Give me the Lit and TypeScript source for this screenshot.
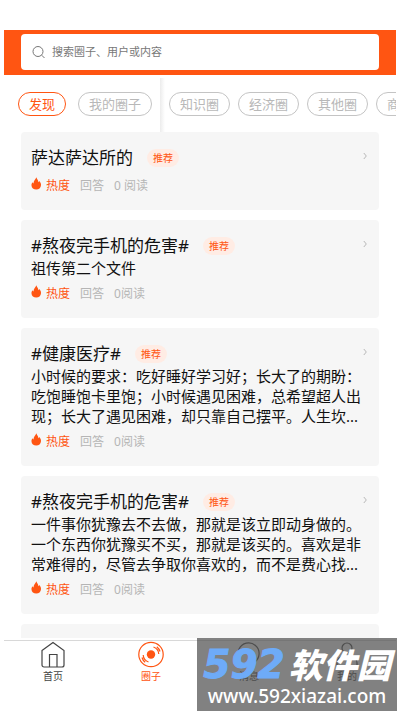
import { LitElement, html, css, svg, nothing } from "lit";
import { customElement, property } from "lit/decorators.js";
import { classMap } from "lit/directives/class-map.js";

interface Post {
  title: string;
  body: string[];
  reads: string;
}

const posts: Post[] = [
  { title: "萨达萨达所的", body: [], reads: "0 阅读" },
  { title: "#熬夜完手机的危害#", body: ["祖传第二个文件"], reads: "0阅读" },
  {
    title: "#健康医疗#",
    body: [
      "小时候的要求：吃好睡好学习好；长大了的期盼：",
      "吃饱睡饱卡里饱；小时候遇见困难，总希望超人出",
      "现；长大了遇见困难，却只靠自己摆平。人生坎...",
    ],
    reads: "0阅读",
  },
  {
    title: "#熬夜完手机的危害#",
    body: [
      "一件事你犹豫去不去做，那就是该立即动身做的。",
      "一个东西你犹豫买不买，那就是该买的。喜欢是非",
      "常难得的，尽管去争取你喜欢的，而不是费心找...",
    ],
    reads: "0阅读",
  },
];

const base = css`
  * {
    box-sizing: border-box;
  }
  button,
  input {
    font: inherit;
    color: inherit;
    background: none;
    border: 0;
    margin: 0;
    padding: 0;
  }
  svg {
    display: block;
    flex: none;
  }
`;

@customElement("post-card")
class PostCard extends LitElement {
  @property({ attribute: false }) post!: Post;

  static styles = [
    base,
    css`
      :host {
        display: block;
      }
      .card {
        background: #f6f6f6;
        border-radius: 4px;
        padding: 14px 11px 15px 10px;
      }
      .head {
        display: flex;
        align-items: center;
        height: 24px;
      }
      .title {
        margin: 0;
        font-size: 17px;
        font-weight: 400;
        line-height: 24px;
        white-space: nowrap;
      }
      .tag {
        margin-left: 14px;
        padding: 0 6px;
        border-radius: 9px;
        background: #ffece4;
        color: #ff5512;
        font-size: 10px;
        line-height: 18px;
      }
      .more {
        margin-left: auto;
        align-self: flex-start;
        padding: 6px 0;
      }
      .body {
        margin: 0;
        font-size: 15px;
        line-height: 20px;
      }
      .meta {
        display: flex;
        align-items: center;
        gap: 10px;
        margin-top: 7px;
        font-size: 12px;
        line-height: 18px;
        color: #b5b5b5;
      }
      .hot {
        display: flex;
        gap: 4px;
        color: #ff5512;
      }
    `,
  ];

  render() {
    const { title, body, reads } = this.post;
    return html`<article class="card">
      <div class="head">
        <h2 class="title">${title}</h2>
        <span class="tag">推荐</span>
        <button class="more" aria-label="查看详情">
          <svg width="6" height="8" viewBox="0 0 6 8" fill="none" stroke="#b8b8b8">
            <path d="M1.8 1 4.3 4 1.8 7" />
          </svg>
        </button>
      </div>
      ${body.length
        ? html`<p class="body">${body.map((l, i) => html`${i ? html`<br />` : nothing}${l}`)}</p>`
        : nothing}
      <div class="meta">
        <span class="hot">
          <svg width="11" height="14" viewBox="0 0 11 14" fill="#ff5512">
            <path
              d="M5.6.2c.1 1.300.8 2.100 1.300 3 .4.800.5 1.400.4 2.100.5-.3.800-.7.900-1.200C9.500 5.400 10.100 6.700 10 8.200 9.800 10.900 7.900 12.500 5.300 12.500 2.600 12.500.6 10.800.5 8.400.4 7.200.8 6.100 1.500 5.200c.2.700.5 1.100 1 1.300C2.500 3.800 4.300 2.500 5.600.2Z"
            />
          </svg>
          热度</span
        >
        <span>回答</span>
        <span>${reads}</span>
      </div>
    </article>`;
  }
}

const icons = {
  home: svg`<path d="M2 9.500 13 1.500l11 8V24a2 2 0 0 1-2 2H4a2 2 0 0 1-2-2ZM9.500 26V13.500h7.500V26" />`,
  circle: svg`<circle cx="13" cy="13.500" r="12.200" /><circle cx="13" cy="13.500" r="4.200" fill="currentColor" stroke="none" />
    <path d="M15.500 6a8 8 0 0 1 5.300 7M18.800 5.700a9.500 9.500 0 0 1 3.200 4.800M10.500 21a8 8 0 0 1-5.300-7M7.200 21.300A9.500 9.500 0 0 1 4 16.500" />`,
  chat: svg`<path d="M3.400 17.500A10.500 10.500 0 1 1 9 22.300L1.800 24.500Z" />`,
  user: svg`<circle cx="13" cy="7" r="5" /><path d="M3 25v-3a7 7 0 0 1 7-7h6a7 7 0 0 1 7 7v3Z" />`,
};

const tabs = [
  { label: "首页", icon: icons.home },
  { label: "圈子", icon: icons.circle, active: true },
  { label: "消息", icon: icons.chat },
  { label: "我的", icon: icons.user },
];

@customElement("app-root")
class AppRoot extends LitElement {
  static styles = [
    base,
    css`
      :host {
        display: flex;
        flex-direction: column;
        position: relative;
        height: 100vh;
        overflow: hidden;
        padding: 30px 4px 0;
        box-sizing: border-box;
        background: #fff;
        color: #111;
        font-family: "Noto Sans", "Noto Sans CJK SC", sans-serif;
      }
      .top {
        background: #ff5512;
        padding: 4px 17px 5px;
      }
      .search {
        display: flex;
        align-items: center;
        gap: 6px;
        height: 36px;
        padding: 0 11px;
        border-radius: 4px;
        background: #fff;
        color: #777;
      }
      .search input {
        flex: 1;
        min-width: 0;
        font-size: 11px;
        line-height: 16px;
        outline: none;
      }
      .search input::placeholder {
        color: #777;
        opacity: 1;
      }
      .filters {
        display: flex;
        flex: none;
        align-items: center;
        height: 57px;
        padding-left: 14px;
        overflow: hidden;
      }
      .mine {
        display: flex;
        gap: 12px;
        flex: none;
      }
      .divider {
        flex: none;
        align-self: flex-end;
        width: 5px;
        height: 54px;
        margin: 0 4px 0 8px;
        background: linear-gradient(to right, #ececec, #fff);
      }
      .topics {
        display: flex;
        gap: 8px;
        min-width: 0;
        overflow: hidden;
      }
      .pill {
        flex: none;
        height: 24px;
        padding: 0 10px;
        border: 1px solid #c4c4c4;
        border-radius: 12px;
        color: #b8b8b8;
        font-size: 13px;
        line-height: 22px;
      }
      .pill.active {
        border-color: #ff5512;
        color: #ff5512;
      }
      .list {
        flex: 1;
        min-height: 0;
        overflow: hidden;
        display: flex;
        flex-direction: column;
        gap: 10px;
        padding: 0 17px;
        margin-bottom: 2px;
      }
      .list > * {
        flex: none;
      }
      .next {
        height: 24px;
        border-radius: 4px;
        background: #f6f6f6;
      }
      .nav {
        display: flex;
        flex: none;
        height: 71px;
        border-top: 1px solid #d8d8d8;
      }
      .tab {
        flex: 1;
        display: flex;
        flex-direction: column;
        align-items: center;
        color: #444;
        font-size: 10px;
        line-height: 16px;
      }
      .tab.active {
        color: #ff5512;
      }
      .mark {
        position: absolute;
        right: 3px;
        bottom: 0;
        width: 200px;
        height: 73px;
        padding-top: 8px;
        background: rgba(80, 80, 80, 0.72);
        color: #fff;
        text-align: center;
        white-space: nowrap;
        pointer-events: none;
      }
      .brand {
        display: flex;
        justify-content: center;
        align-items: center;
        gap: 4px;
        height: 38px;
        font-size: 34px;
        font-weight: 900;
        font-style: italic;
        line-height: 38px;
      }
      .digits {
        color: #6eabf8;
        font-family: "DejaVu Sans", sans-serif;
        font-size: 39px;
        -webkit-text-stroke: 1px #6eabf8;
      }
      .site {
        font-size: 19px;
        font-weight: 500;
        line-height: 24px;
      }
    `,
  ];

  render() {
    return html`
      <header class="top">
        <label class="search">
          <svg width="14" height="14" viewBox="0 0 14 14" fill="none" stroke="currentColor">
            <circle cx="6" cy="6.500" r="5" />
            <path d="m9.700 10.200 2.800 2.800" />
          </svg>
          <input type="search" aria-label="搜索" placeholder="搜索圈子、用户或内容" />
        </label>
      </header>
      <div class="filters">
        <div class="mine">
          <button class="pill active">发现</button>
          <button class="pill">我的圈子</button>
        </div>
        <div class="divider"></div>
        <div class="topics">
          ${["知识圈", "经济圈", "其他圈", "商业圈"].map((t) => html`<button class="pill">${t}</button>`)}
        </div>
      </div>
      <main class="list">
        ${posts.map((p) => html`<post-card .post=${p}></post-card>`)}
        <div class="next"></div>
      </main>
      <nav class="nav">
        ${tabs.map(
          (t) => html`<button class=${classMap({ tab: true, active: !!t.active })}>
            <svg width="26" height="27" viewBox="0 0 26 27" fill="none" stroke="currentColor" stroke-width="1.2">
              ${t.icon}
            </svg>
            ${t.label}
          </button>`,
        )}
      </nav>
      <div class="mark">
        <div class="brand"><span class="digits">592</span><span>软件园</span></div>
        <div class="site">www.592xiazai.com</div>
      </div>
    `;
  }
}
